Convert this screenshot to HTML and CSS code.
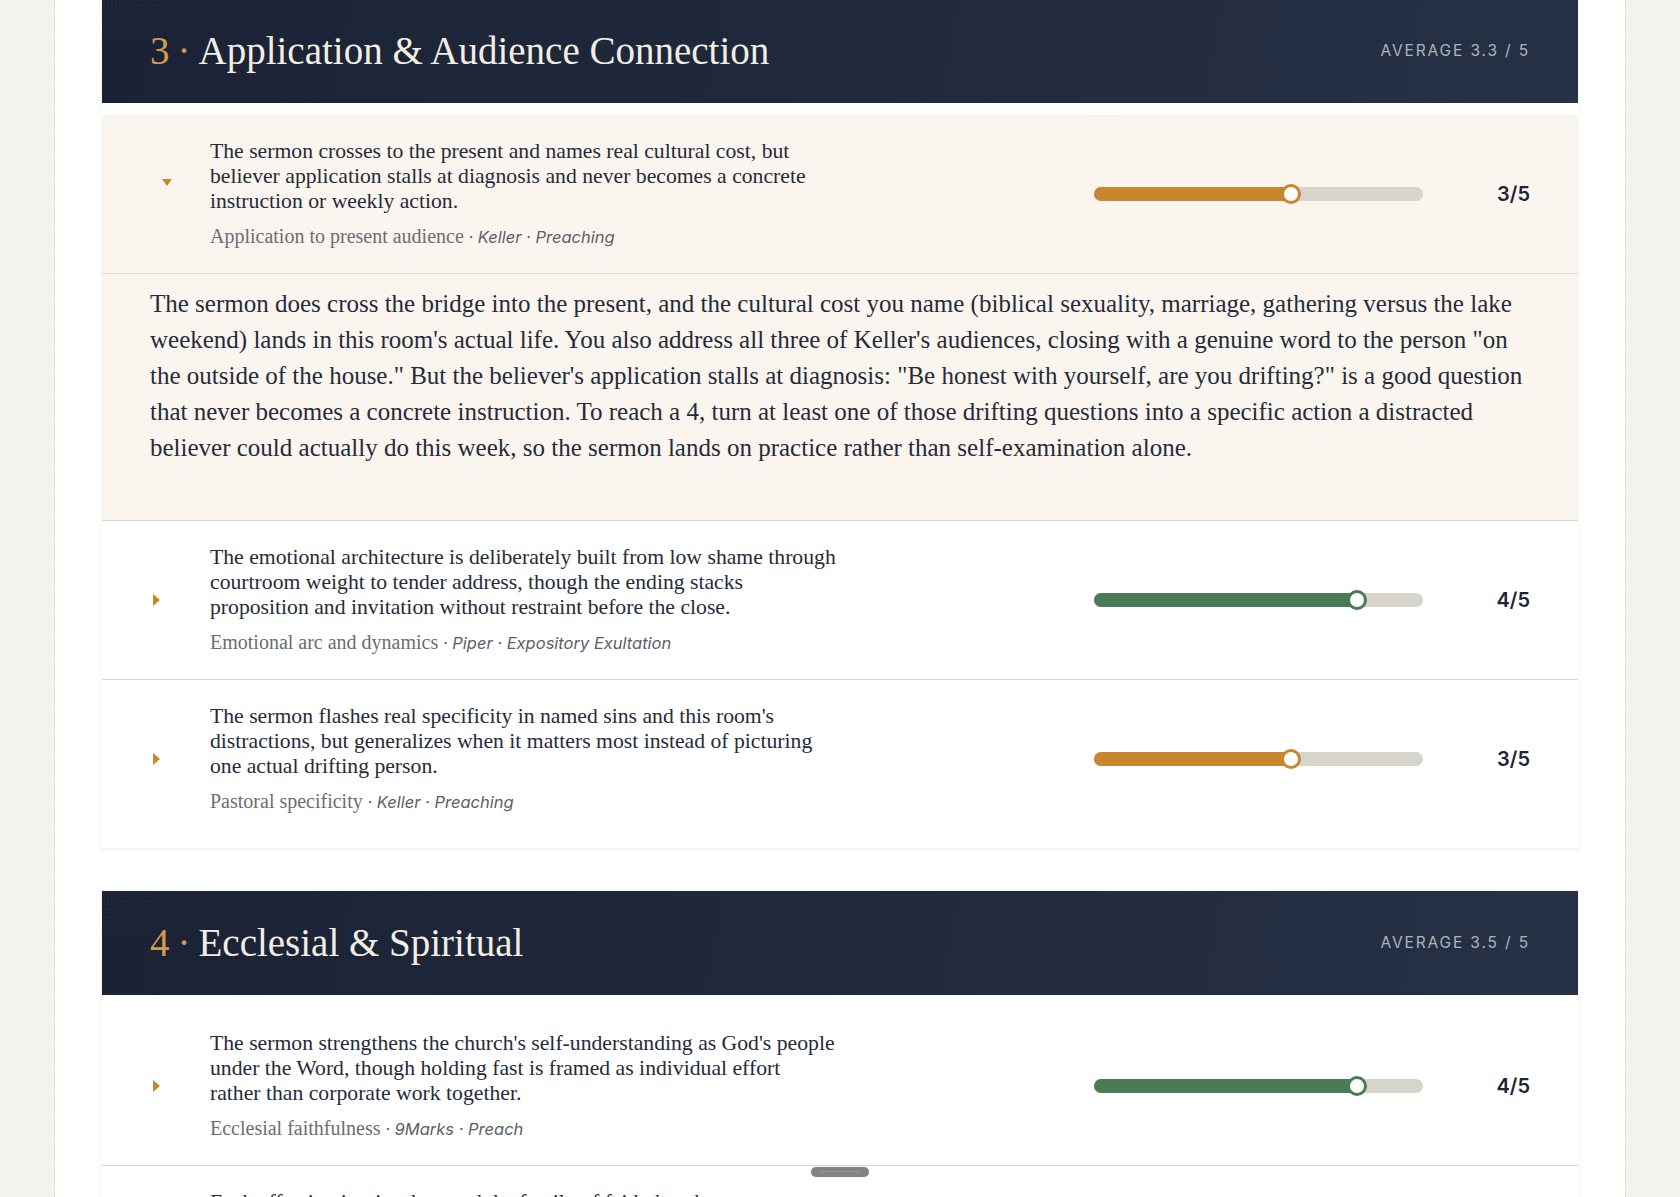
FILE: index.html
```html
<!DOCTYPE html>
<html lang="en">
<head>
<meta charset="utf-8">
<title>Sermon Review</title>
<link rel="stylesheet" href="styles.css">
</head>
<body>
<div class="page">
  <main class="sheet">
    <section class="section first">
      <header class="section-head">
        <h2 class="section-title"><span class="num">3</span><span class="sep">·</span>Application &amp; Audience Connection</h2>
        <div class="avg">AVERAGE 3.3 / 5</div>
      </header>
      <div class="rows">
        <div class="item open">
          <div class="row">
            <span class="caret down"></span>
            <div class="summary">
              <p class="text">The sermon crosses to the present and names real cultural cost, but<br>believer application stalls at diagnosis and never becomes a concrete<br>instruction or weekly action.</p>
              <p class="meta"><span class="crit">Application to present audience</span><span class="src"> · Keller · Preaching</span></p>
            </div>
            <div class="spacer"></div>
            <div class="track"><div class="fill amber" style="width:60%"></div><span class="knob amber-k" style="left:60%"></span></div>
            <div class="score">3/5</div>
          </div>
          <div class="detail">
            <p>The sermon does cross the bridge into the present, and the cultural cost you name (biblical sexuality, marriage, gathering versus the lake<br>weekend) lands in this room's actual life. You also address all three of Keller's audiences, closing with a genuine word to the person "on<br>the outside of the house." But the believer's application stalls at diagnosis: "Be honest with yourself, are you drifting?" is a good question<br>that never becomes a concrete instruction. To reach a 4, turn at least one of those drifting questions into a specific action a distracted<br>believer could actually do this week, so the sermon lands on practice rather than self-examination alone.</p>
          </div>
        </div>
        <div class="item">
          <div class="row">
            <span class="caret"></span>
            <div class="summary">
              <p class="text">The emotional architecture is deliberately built from low shame through<br>courtroom weight to tender address, though the ending stacks<br>proposition and invitation without restraint before the close.</p>
              <p class="meta"><span class="crit">Emotional arc and dynamics</span><span class="src"> · Piper · Expository Exultation</span></p>
            </div>
            <div class="spacer"></div>
            <div class="track"><div class="fill green" style="width:80%"></div><span class="knob green-k" style="left:80%"></span></div>
            <div class="score">4/5</div>
          </div>
        </div>
        <div class="item">
          <div class="row">
            <span class="caret"></span>
            <div class="summary">
              <p class="text">The sermon flashes real specificity in named sins and this room's<br>distractions, but generalizes when it matters most instead of picturing<br>one actual drifting person.</p>
              <p class="meta"><span class="crit">Pastoral specificity</span><span class="src"> · Keller · Preaching</span></p>
            </div>
            <div class="spacer"></div>
            <div class="track"><div class="fill amber" style="width:60%"></div><span class="knob amber-k" style="left:60%"></span></div>
            <div class="score">3/5</div>
          </div>
        </div>
      </div>
    </section>

    <section class="section">
      <header class="section-head">
        <h2 class="section-title"><span class="num">4</span><span class="sep">·</span>Ecclesial &amp; Spiritual</h2>
        <div class="avg">AVERAGE 3.5 / 5</div>
      </header>
      <div class="rows">
        <div class="item">
          <div class="row">
            <span class="caret"></span>
            <div class="summary">
              <p class="text">The sermon strengthens the church's self-understanding as God's people<br>under the Word, though holding fast is framed as individual effort<br>rather than corporate work together.</p>
              <p class="meta"><span class="crit">Ecclesial faithfulness</span><span class="src"> · 9Marks · Preach</span></p>
            </div>
            <div class="spacer"></div>
            <div class="track"><div class="fill green" style="width:80%"></div><span class="knob green-k" style="left:80%"></span></div>
            <div class="score">4/5</div>
          </div>
        </div>
        <div class="item">
          <div class="row">
            <span class="caret"></span>
            <div class="summary">
              <p class="text">Each affection is stirred toward the family of faith, but the sermon<br>rarely names what the gathered church does together each week.</p>
              <p class="meta"><span class="crit">Spiritual formation</span><span class="src"> · Willard · Renovation</span></p>
            </div>
            <div class="spacer"></div>
            <div class="track"><div class="fill amber" style="width:60%"></div><span class="knob amber-k" style="left:60%"></span></div>
            <div class="score">3/5</div>
          </div>
        </div>
      </div>
    </section>
  </main>
  <div class="handle"></div>
</div>
</body>
</html>
```

FILE: styles.css
```css
html, body {
  margin: 0;
  padding: 0;
}

body {
  background: #f5f3ee;
  font-family: "Liberation Serif", "Times New Roman", serif;
  color: #262b39;
}

.page {
  position: relative;
  height: 1197px;
  overflow: hidden;
  background-color: #f5f3ee;
  background-image: radial-gradient(rgba(0, 0, 0, 0.025) 0.6px, transparent 0.9px);
  background-size: 3px 3px;
}

.sheet {
  width: 1572px;
  box-sizing: border-box;
  margin: 0 auto;
  padding: 0 47px;
  min-height: 1197px;
  background: #ffffff;
  border-left: 1px solid #e2dfd7;
  border-right: 1px solid #e2dfd7;
}

.section {
  background: #ffffff;
  box-shadow: 0 1px 3px rgba(60, 50, 30, 0.09);
  margin-bottom: 43px;
}

.section.first {
  margin-top: -1px;
}

.section-head {
  position: relative;
  height: 104px;
  display: flex;
  align-items: center;
  justify-content: space-between;
  padding: 0 48px;
  background: linear-gradient(100deg, #1b2235 0%, #212a3d 55%, #273145 100%);
  overflow: hidden;
}

.section-head::before,
.section-head::after {
  content: "";
  position: absolute;
  pointer-events: none;
  background-image: radial-gradient(rgba(255, 255, 255, 0.1) 0.5px, transparent 0.8px);
  background-size: 4px 4px;
}

.section-head::before {
  left: 0;
  top: 0;
  width: 200px;
  height: 42px;
  -webkit-mask-image: linear-gradient(160deg, #000 0%, transparent 60%);
  mask-image: linear-gradient(160deg, #000 0%, transparent 60%);
}

.section-head::after {
  right: 0;
  bottom: 0;
  width: 110px;
  height: 36px;
  -webkit-mask-image: linear-gradient(-20deg, rgba(0,0,0,.6) 0%, transparent 60%);
  mask-image: linear-gradient(-20deg, rgba(0,0,0,.6) 0%, transparent 60%);
}

.section-title {
  margin: 0 0 2px;
  font-weight: 400;
  font-size: 39px;
  line-height: 1;
  color: #f3eee4;
  white-space: nowrap;
}

.section-title .num {
  color: #d29c4b;
}

.section-title .sep {
  color: #d29c4b;
  margin: 0 8px 0 8px;
}

.avg {
  font-family: Inter, "Liberation Sans", sans-serif;
  font-size: 15.5px;
  letter-spacing: 0.12em;
  color: #aeb3be;
  margin-bottom: 2px;
}

.rows {
  padding: 12px 0 10px;
}

.item + .item {
  border-top: 1px solid #dcd7cd;
}

.item.open {
  background: #faf6ef;
}

.row {
  display: grid;
  grid-template-columns: 60px 650px 1fr 329px 107px;
  align-items: center;
  padding: 24px 48px 24px;
}

.caret {
  width: 0;
  height: 0;
  margin-left: 3px;
  border-top: 6px solid transparent;
  border-bottom: 6px solid transparent;
  border-left: 7px solid #c8872d;
}

.caret.down {
  margin-left: 12px;
  border-left: 5px solid transparent;
  border-right: 5px solid transparent;
  border-top: 7px solid #c8872d;
  border-bottom: 0;
  transform: translateY(-12px);
}

.summary {
  min-width: 0;
}

.text {
  margin: 0;
  font-size: 21.7px;
  line-height: 25px;
  color: #262b39;
  white-space: nowrap;
}

.meta {
  margin: 11px 0 0;
  line-height: 23px;
  white-space: nowrap;
}

.crit {
  font-size: 20px;
  color: #6b6d73;
}

.src {
  font-family: Inter, "Liberation Sans", sans-serif;
  font-style: italic;
  font-size: 16.5px;
  color: #5a5e68;
}

.track {
  position: relative;
  height: 14px;
  border-radius: 7px;
  background: #d7d4cc;
}

.fill {
  height: 100%;
  border-radius: 7px;
}

.fill.amber {
  background: #c8862e;
}

.fill.green {
  background: #4a7b57;
}

.knob {
  position: absolute;
  top: 50%;
  width: 20px;
  height: 20px;
  box-sizing: border-box;
  border-radius: 50%;
  background: #ffffff;
  transform: translate(-50%, -50%);
}

.amber-k {
  border: 3px solid #c8862e;
}

.green-k {
  border: 3px solid #4a7b57;
}

.score {
  text-align: right;
  font-family: Inter, "Liberation Sans", sans-serif;
  font-weight: 600;
  font-size: 20px;
  color: #1f2433;
}

.detail {
  border-top: 1px solid #dcd7cd;
  padding: 12px 48px 54px;
}

.detail p {
  margin: 0;
  font-size: 25px;
  line-height: 36px;
  color: #262b39;
  white-space: nowrap;
}

.handle {
  position: absolute;
  left: 811px;
  top: 1167px;
  width: 58px;
  height: 10px;
  border-radius: 5px;
  background: #808389;
  box-shadow: 0 0 3px rgba(0, 0, 0, 0.08);
}

.handle::after {
  content: "";
  position: absolute;
  left: 10px;
  right: 10px;
  top: 4px;
  border-top: 1px dotted #c9a25a;
}
```
